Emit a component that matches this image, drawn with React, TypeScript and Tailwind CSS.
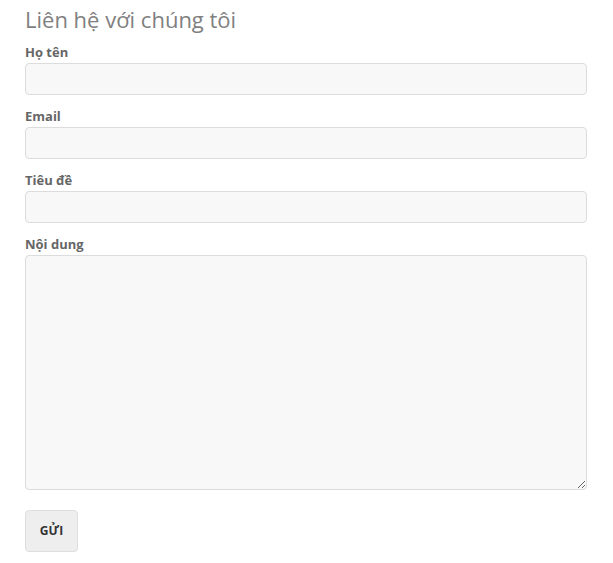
import React from 'react';

const fields = [
  { label: 'Họ tên', type: 'text' },
  { label: 'Email', type: 'email' },
  { label: 'Tiêu đề', type: 'text' },
];

const App: React.FC = () => {
  return (
    <div className="w-[613px] h-[563px] bg-white px-[25px] pt-[4px] font-['Open_Sans',sans-serif]">
      <h2 className="text-[22px] leading-[30px] font-normal text-[#808080] mb-[9px]">Liên hệ với chúng tôi</h2>

      <form className="flex flex-col w-[562px]" onSubmit={(e) => e.preventDefault()}>
        {fields.map((f) => (
          <div key={f.label} className="flex flex-col mb-[12px]">
            <label className="text-[13px] leading-[18px] font-bold text-[#666] mb-[2px]">{f.label}</label>
            <input
              type={f.type}
              className="h-[32px] rounded-[4px] border border-[#dcdcdc] bg-[#f8f8f8] px-2 outline-none"
            />
          </div>
        ))}

        {/* Message */}
        <div className="flex flex-col mb-[20px]">
          <label className="text-[13px] leading-[18px] font-bold text-[#666] mb-[2px]">Nội dung</label>
          <textarea className="h-[235px] rounded-[4px] border border-[#dcdcdc] bg-[#f8f8f8] px-2 outline-none" />
        </div>

        <div>
          <button
            type="submit"
            className="h-[42px] w-[53px] rounded-[4px] border border-[#dedede] bg-[#eeeeee] text-[12px] font-bold text-[#333]"
          >
            GỬI
          </button>
        </div>
      </form>
    </div>
  );
};

export default App;
